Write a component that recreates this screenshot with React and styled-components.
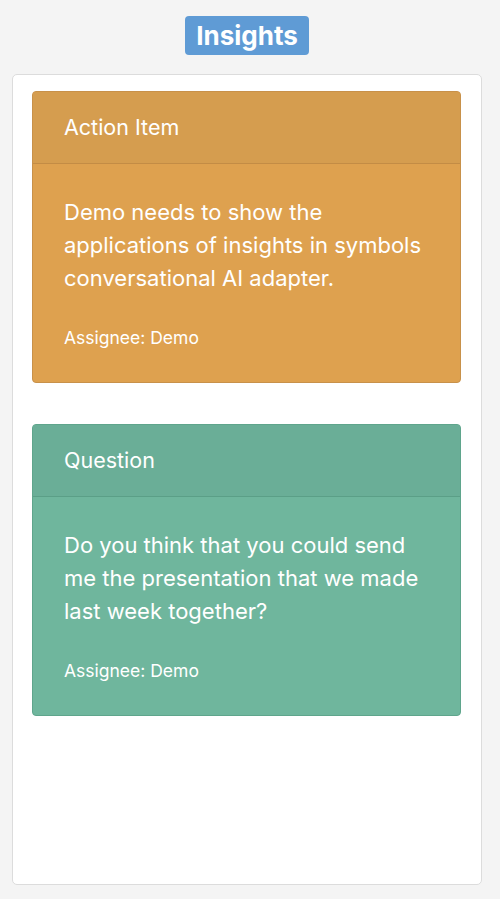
import React from 'react';
import styled, { createGlobalStyle } from 'styled-components';

const insights = [
  {
    type: 'Action Item',
    text: 'Demo needs to show the applications of insights in symbols conversational AI adapter.',
    assignee: 'Demo',
    tone: 'orange',
  },
  {
    type: 'Question',
    text: 'Do you think that you could send me the presentation that we made last week together?',
    assignee: 'Demo',
    tone: 'green',
  },
];

const tones = {
  orange: { head: '#d59d4f', body: '#dea14f', border: '#c8914a', line: '#c38c45' },
  green: { head: '#6aae97', body: '#6fb69d', border: '#5fa58c', line: '#5b9f87' },
};

function App() {
  return (
    <>
      <GlobalStyle />
      <Page>
        <TitleRow>
          <Title>Insights</Title>
        </TitleRow>
        <Panel>
          {insights.map((item, i) => (
            <Card key={i} tone={item.tone}>
              <CardHeader tone={item.tone}>{item.type}</CardHeader>
              <CardBody>
                <CardText>{item.text}</CardText>
                <Assignee>Assignee: {item.assignee}</Assignee>
              </CardBody>
            </Card>
          ))}
        </Panel>
      </Page>
    </>
  );
}

const GlobalStyle = createGlobalStyle`
  html, body {
    margin: 0;
    padding: 0;
    background: #f4f4f4;
    font-family: Inter, "Noto Sans", sans-serif;
  }
`;

const Page = styled.div`
  width: 500px;
  height: 899px;
  display: flex;
  flex-direction: column;
  box-sizing: border-box;
  padding: 16px 18px 14px 12px;
`;

const TitleRow = styled.div`
  display: flex;
  justify-content: center;
  margin-bottom: 19px;
`;

const Title = styled.h1`
  margin: 0;
  background: #5f9bd5;
  color: #fff;
  font-size: 26px;
  font-weight: 700;
  line-height: 39px;
  padding: 0 11px;
  border-radius: 4px;
`;

const Panel = styled.div`
  flex: 1;
  background: #fff;
  border: 1px solid #dcdcdc;
  border-radius: 5px;
  padding: 16px 20px 16px 19px;
  display: flex;
  flex-direction: column;
  gap: 41px;
`;

const Card = styled.div`
  background: ${(p) => tones[p.tone].body};
  border: 1px solid ${(p) => tones[p.tone].border};
  border-radius: 4px;
  color: #fff;
  overflow: hidden;
`;

const CardHeader = styled.div`
  background: ${(p) => tones[p.tone].head};
  border-bottom: 1px solid ${(p) => tones[p.tone].line};
  padding: 20px 31px;
  font-size: 21.5px;
  line-height: 31px;
`;

const CardBody = styled.div`
  padding: 32px 31px 32px;
`;

const CardText = styled.p`
  margin: 0 0 31px;
  font-size: 22px;
  line-height: 33px;
`;

const Assignee = styled.div`
  font-size: 17.5px;
  line-height: 24px;
`;

export default App;
